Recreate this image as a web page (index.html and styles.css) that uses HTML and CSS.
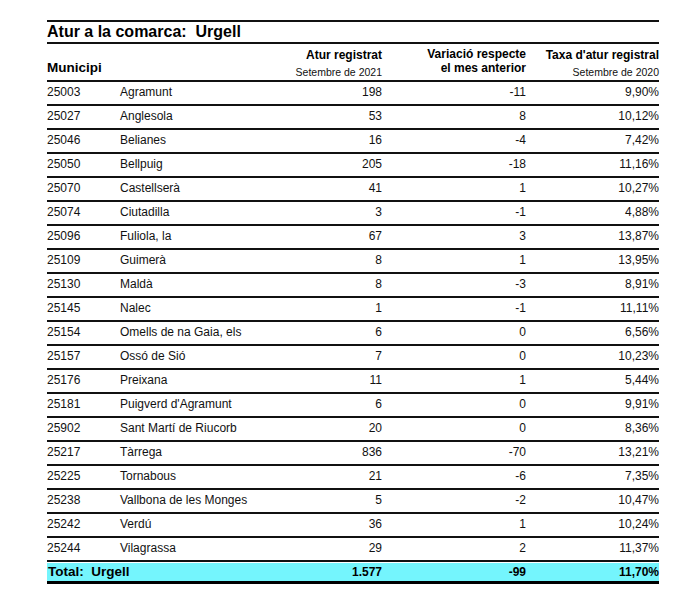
FILE: index.html
```html
<!DOCTYPE html>
<html lang="ca">
<head>
<meta charset="utf-8">
<title>Atur a la comarca: Urgell</title>
<link rel="stylesheet" href="styles.css">
</head>
<body>
<div class="report">
  <div class="rule"></div>
  <h1 class="title">Atur a la comarca:&nbsp; Urgell</h1>
  <div class="rule"></div>
  <div class="grid head">
    <div class="hc hc-mun">Municipi</div>
    <div class="hc"></div>
    <div class="hc hc-r"><span class="hb">Atur registrat</span><span class="hs">Setembre de 2021</span></div>
    <div class="hc hc-r hc-var"><span class="hb">Variació respecte</span><span class="hb">el mes anterior</span></div>
    <div class="hc hc-r"><span class="hb">Taxa d'atur registral</span><span class="hs">Setembre de 2020</span></div>
  </div>
  <div class="rule"></div>
  <div class="grid row"><span>25003</span><span>Agramunt</span><span class="r">198</span><span class="r">-11</span><span class="r">9,90%</span></div>
  <div class="grid row"><span>25027</span><span>Anglesola</span><span class="r">53</span><span class="r">8</span><span class="r">10,12%</span></div>
  <div class="grid row"><span>25046</span><span>Belianes</span><span class="r">16</span><span class="r">-4</span><span class="r">7,42%</span></div>
  <div class="grid row"><span>25050</span><span>Bellpuig</span><span class="r">205</span><span class="r">-18</span><span class="r">11,16%</span></div>
  <div class="grid row"><span>25070</span><span>Castellserà</span><span class="r">41</span><span class="r">1</span><span class="r">10,27%</span></div>
  <div class="grid row"><span>25074</span><span>Ciutadilla</span><span class="r">3</span><span class="r">-1</span><span class="r">4,88%</span></div>
  <div class="grid row"><span>25096</span><span>Fuliola, la</span><span class="r">67</span><span class="r">3</span><span class="r">13,87%</span></div>
  <div class="grid row"><span>25109</span><span>Guimerà</span><span class="r">8</span><span class="r">1</span><span class="r">13,95%</span></div>
  <div class="grid row"><span>25130</span><span>Maldà</span><span class="r">8</span><span class="r">-3</span><span class="r">8,91%</span></div>
  <div class="grid row"><span>25145</span><span>Nalec</span><span class="r">1</span><span class="r">-1</span><span class="r">11,11%</span></div>
  <div class="grid row"><span>25154</span><span>Omells de na Gaia, els</span><span class="r">6</span><span class="r">0</span><span class="r">6,56%</span></div>
  <div class="grid row"><span>25157</span><span>Ossó de Sió</span><span class="r">7</span><span class="r">0</span><span class="r">10,23%</span></div>
  <div class="grid row"><span>25176</span><span>Preixana</span><span class="r">11</span><span class="r">1</span><span class="r">5,44%</span></div>
  <div class="grid row"><span>25181</span><span>Puigverd d'Agramunt</span><span class="r">6</span><span class="r">0</span><span class="r">9,91%</span></div>
  <div class="grid row"><span>25902</span><span>Sant Martí de Riucorb</span><span class="r">20</span><span class="r">0</span><span class="r">8,36%</span></div>
  <div class="grid row"><span>25217</span><span>Tàrrega</span><span class="r">836</span><span class="r">-70</span><span class="r">13,21%</span></div>
  <div class="grid row"><span>25225</span><span>Tornabous</span><span class="r">21</span><span class="r">-6</span><span class="r">7,35%</span></div>
  <div class="grid row"><span>25238</span><span>Vallbona de les Monges</span><span class="r">5</span><span class="r">-2</span><span class="r">10,47%</span></div>
  <div class="grid row"><span>25242</span><span>Verdú</span><span class="r">36</span><span class="r">1</span><span class="r">10,24%</span></div>
  <div class="grid row"><span>25244</span><span>Vilagrassa</span><span class="r">29</span><span class="r">2</span><span class="r">11,37%</span></div>
  <div class="grid total"><span class="tl">Total:&nbsp; Urgell</span><span class="r">1.577</span><span class="r">-99</span><span class="r">11,70%</span></div>
</div>
</body>
</html>
```
FILE: styles.css
```css
html, body {
  margin: 0;
  padding: 0;
  background: #fff;
}
body {
  font-family: "Liberation Sans", Arial, sans-serif;
  color: #111;
}
.report {
  width: 612px;
  margin-left: 47px;
  padding-top: 20px;
}
.rule {
  height: 2px;
  background: #111;
}
.title {
  margin: 0;
  height: 20px;
  line-height: 20px;
  font-size: 16px;
  font-weight: bold;
  color: #000;
}
.grid {
  display: grid;
  grid-template-columns: 73px 150px 112px 144px 133px;
}
.head {
  height: 36px;
}
.hc {
  display: flex;
  flex-direction: column;
  padding-top: 4px;
  font-size: 12px;
  line-height: 14px;
}
.hc-r {
  align-items: flex-end;
  text-align: right;
}
.hc-var {
  padding-top: 3px;
}
.hc-mun {
  padding-top: 16px;
  font-size: 13.5px;
  line-height: 16px;
  font-weight: bold;
  color: #000;
}
.hb {
  font-weight: bold;
  color: #000;
}
.hs {
  font-size: 10.5px;
  line-height: 12px;
  margin-top: 4px;
}
.row {
  height: 22px;
  line-height: 21px;
  font-size: 12px;
  border-bottom: 2px solid #111;
}
.r {
  text-align: right;
}
.total {
  grid-template-columns: 223px 112px 144px 133px;
  margin-top: 1px;
  height: 18px;
  line-height: 18px;
  background: #74f5fd;
  border-bottom: 3px solid #000;
  font-size: 12px;
  font-weight: bold;
  color: #000;
}
.tl {
  padding-left: 1px;
  font-size: 13.5px;
}
```
